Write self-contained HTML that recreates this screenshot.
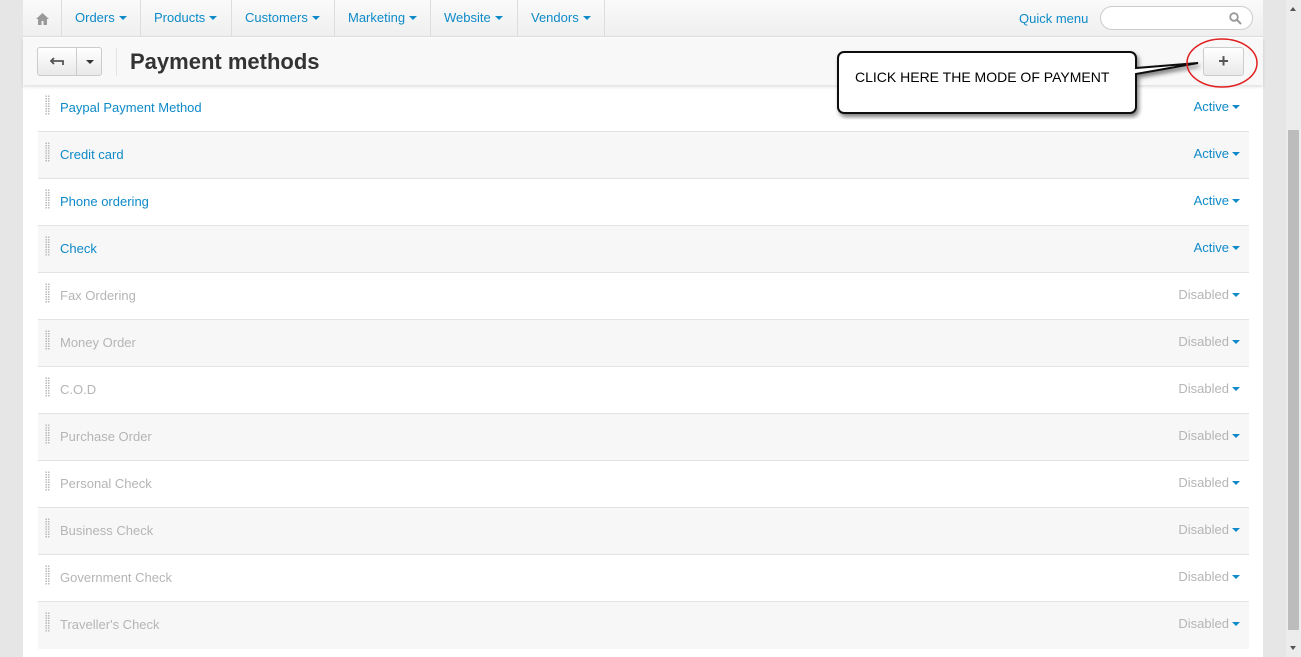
<!DOCTYPE html>
<html><head><style>
*{box-sizing:border-box;margin:0;padding:0}
body{width:1301px;height:657px;overflow:hidden;background:#e6e6e6;font-family:"Liberation Sans",sans-serif;font-size:13px;position:relative}
.main{position:absolute;left:23px;top:0;width:1240px;height:657px;background:#fff}
.nav{height:37px;background:linear-gradient(#fafafa,#efefef);border-bottom:1px solid #ddd;position:relative}
.nav .it{position:absolute;top:0;height:37px;line-height:36px;color:#0e8ac8;border-right:1px solid #ddd;font-size:13px}
.car{display:inline-block;border-left:4px solid transparent;border-right:4px solid transparent;border-top:4px solid #0e8ac8;vertical-align:2px;margin-left:4px}
.hdr{position:absolute;top:38px;left:0;width:1240px;height:47px;background:#f8f8f8;box-shadow:0 2px 3px rgba(0,0,0,.12);z-index:2}
.btn{position:absolute;border:1px solid #ccc;border-radius:3px;background:linear-gradient(#fff,#e9e9e9)}
.row{position:absolute;left:15px;width:1211px;height:47px;border-bottom:1px solid #e3e3e3}
.row .h{position:absolute;left:7px;top:10px;width:5px;height:20px;background-image:radial-gradient(#bbb 45%,transparent 55%);background-size:2.5px 2.5px}
.row .n{position:absolute;left:22px;top:15px;color:#0e8ac8}
.row .s{position:absolute;right:9px;top:14px;color:#0e8ac8}
.row.d .n,.row.d .s{color:#b5b5b5}
.row .s .car{margin-left:3px}
</style></head><body>
<div class="main">
<div class="nav">
<div class="it" style="left:0;width:39px;text-align:center"><svg width="13" height="12" viewBox="0 0 13 12" style="vertical-align:middle"><path d="M6.5 0L0 6h2v6h3.5V8h2v4H11V6h2z" fill="#999"/></svg></div>
<div class="it" style="left:39px;width:79px;padding-left:13px">Orders<span class="car"></span></div>
<div class="it" style="left:118px;width:91px;padding-left:13px">Products<span class="car"></span></div>
<div class="it" style="left:209px;width:103px;padding-left:13px">Customers<span class="car"></span></div>
<div class="it" style="left:312px;width:96px;padding-left:13px">Marketing<span class="car"></span></div>
<div class="it" style="left:408px;width:87px;padding-left:13px">Website<span class="car"></span></div>
<div class="it" style="left:495px;width:87px;padding-left:13px">Vendors<span class="car"></span></div>
<div style="position:absolute;left:996px;top:11px;color:#0e8ac8">Quick menu</div>
<div style="position:absolute;left:1077px;top:6px;width:153px;height:24px;border:1px solid #ccc;border-radius:12px;background:#fff"><svg width="13" height="13" viewBox="0 0 13 13" style="position:absolute;right:10px;top:5px"><circle cx="5" cy="5" r="3.8" stroke="#999" stroke-width="1.8" fill="none"/><path d="M8 8l4 4" stroke="#999" stroke-width="2"/></svg></div>
</div>
<div class="hdr">
<div class="btn" style="left:14px;top:9px;width:65px;height:29px"><div style="position:absolute;left:38px;top:0;width:1px;height:27px;background:#ccc"></div>
<svg width="14" height="10" viewBox="0 0 14 10" style="position:absolute;left:12px;top:9px"><path d="M1 4h12v4M4 1L1 4l3 3" stroke="#555" stroke-width="1.8" fill="none"/></svg>
<span style="position:absolute;left:48px;top:12px;border-left:4px solid transparent;border-right:4px solid transparent;border-top:4px solid #333"></span></div>
<div style="position:absolute;left:93px;top:10px;width:1px;height:28px;background:#e3e3e3"></div>
<div style="position:absolute;left:107px;top:11px;font-size:22px;font-weight:bold;color:#333">Payment methods</div>
<div class="btn" style="left:1180px;top:9px;width:41px;height:29px;text-align:center;line-height:26px;font-size:18px;font-weight:bold;color:#555">+</div>
</div>
<div class="row" style="top:85px;background:#fff"><div class="h"></div><div class="n">Paypal Payment Method</div><div class="s">Active<span class="car"></span></div></div>
<div class="row" style="top:132px;background:#f7f7f7"><div class="h"></div><div class="n">Credit card</div><div class="s">Active<span class="car"></span></div></div>
<div class="row" style="top:179px;background:#fff"><div class="h"></div><div class="n">Phone ordering</div><div class="s">Active<span class="car"></span></div></div>
<div class="row" style="top:226px;background:#f7f7f7"><div class="h"></div><div class="n">Check</div><div class="s">Active<span class="car"></span></div></div>
<div class="row d" style="top:273px;background:#fff"><div class="h"></div><div class="n">Fax Ordering</div><div class="s">Disabled<span class="car"></span></div></div>
<div class="row d" style="top:320px;background:#f7f7f7"><div class="h"></div><div class="n">Money Order</div><div class="s">Disabled<span class="car"></span></div></div>
<div class="row d" style="top:367px;background:#fff"><div class="h"></div><div class="n">C.O.D</div><div class="s">Disabled<span class="car"></span></div></div>
<div class="row d" style="top:414px;background:#f7f7f7"><div class="h"></div><div class="n">Purchase Order</div><div class="s">Disabled<span class="car"></span></div></div>
<div class="row d" style="top:461px;background:#fff"><div class="h"></div><div class="n">Personal Check</div><div class="s">Disabled<span class="car"></span></div></div>
<div class="row d" style="top:508px;background:#f7f7f7"><div class="h"></div><div class="n">Business Check</div><div class="s">Disabled<span class="car"></span></div></div>
<div class="row d" style="top:555px;background:#fff"><div class="h"></div><div class="n">Government Check</div><div class="s">Disabled<span class="car"></span></div></div>
<div class="row d" style="top:602px;background:#f7f7f7;border:none"><div class="h"></div><div class="n">Traveller's Check</div><div class="s">Disabled<span class="car"></span></div></div>
</div>
<svg width="1301" height="657" style="position:absolute;left:0;top:0;z-index:5;pointer-events:none">
<defs><filter id="sh"><feDropShadow dx="2" dy="3" stdDeviation="2" flood-opacity=".5"/></filter></defs>
<path d="M844 52H1130a6 6 0 0 1 6 6V68L1198 63L1136 74V107a6 6 0 0 1-6 6H844a6 6 0 0 1-6-6V58a6 6 0 0 1 6-6z" fill="#fff" stroke="#111" stroke-width="2" filter="url(#sh)"/>
<ellipse cx="1222" cy="63" rx="35" ry="24" fill="none" stroke="#e02020" stroke-width="1.5"/>
<text x="855" y="82" font-family="Liberation Sans" font-size="14" fill="#000">CLICK HERE THE MODE OF PAYMENT</text>
</svg>
<div style="position:absolute;left:1286px;top:0;width:15px;height:657px;background:#ececec"><div style="position:absolute;left:2px;top:130px;width:11px;height:500px;background:#bcbcbc;border-radius:1px"></div>
<span style="position:absolute;left:4px;top:7px;border-left:3px solid transparent;border-right:3px solid transparent;border-bottom:4px solid #555"></span>
<span style="position:absolute;left:4px;top:646px;border-left:3px solid transparent;border-right:3px solid transparent;border-top:4px solid #555"></span></div>
</body></html>
